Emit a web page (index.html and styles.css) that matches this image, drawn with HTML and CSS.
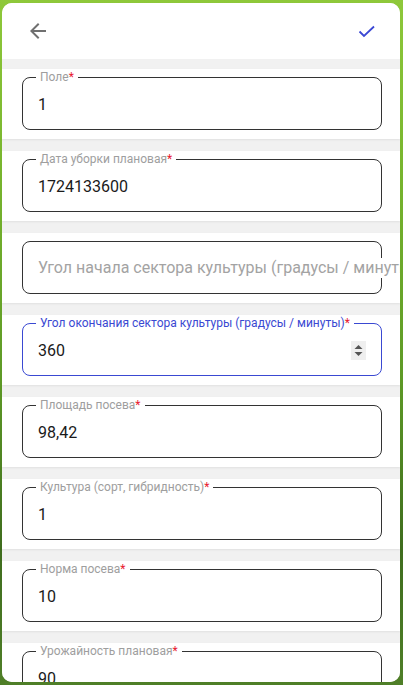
FILE: index.html
```html
<!DOCTYPE html>
<html lang="ru">
<head>
<meta charset="utf-8">
<title>Форма</title>
<link rel="stylesheet" href="styles.css">
</head>
<body>
<div class="card">
  <header class="topbar">
    <svg class="icon-back" width="24" height="24" viewBox="0 0 24 24"><path d="M20 11H7.83l5.59-5.59L12 4l-8 8 8 8 1.41-1.41L7.83 13H20v-2z" fill="#707070"/></svg>
    <svg class="icon-check" width="18" height="14" viewBox="0 0 18 14"><polyline points="1.5,6.5 6,11 16,1.5" fill="none" stroke="#3b48d4" stroke-width="1.8"/></svg>
  </header>
  <div class="list">
    <section class="row"><div class="field"><span class="label">Поле<b>*</b></span><span class="value">1</span></div></section>
    <section class="row"><div class="field"><span class="label">Дата уборки плановая<b>*</b></span><span class="value">1724133600</span></div></section>
    <section class="row"><div class="field"><span class="placeholder">Угол начала сектора культуры (градусы / минуты)</span></div></section>
    <section class="row"><div class="field focused"><span class="label">Угол окончания сектора культуры (градусы / минуты)<b>*</b></span><span class="value">360</span>
      <span class="spinner"><svg width="15" height="19" viewBox="0 0 15 19"><path d="M3.5 8 L7.5 4 L11.5 8 Z" fill="#555"/><path d="M3.5 11 L7.5 15 L11.5 11 Z" fill="#555"/></svg></span></div></section>
    <section class="row"><div class="field"><span class="label">Площадь посева<b>*</b></span><span class="value">98,42</span></div></section>
    <section class="row"><div class="field"><span class="label">Культура (сорт, гибридность)<b>*</b></span><span class="value">1</span></div></section>
    <section class="row"><div class="field"><span class="label">Норма посева<b>*</b></span><span class="value">10</span></div></section>
    <section class="row"><div class="field"><span class="label">Урожайность плановая<b>*</b></span><span class="value">90</span></div></section>
  </div>
</div>
</body>
</html>
```
FILE: styles.css
```css
html, body {
  margin: 0;
  padding: 0;
  height: 685px;
  overflow: hidden;
}
body {
  background: linear-gradient(180deg, #8ec83a 0%, #78b52e 25%, #5e9a26 55%, #3f6d1e 80%, #4f7f28 100%);
  font-family: Roboto, "Noto Sans", sans-serif;
}
.card {
  margin: 3px 3px 0 2px;
  height: 679px;
  background: #f1f1f1;
  border-radius: 10px;
  overflow: hidden;
  display: flex;
  flex-direction: column;
}
.topbar {
  height: 56px;
  flex: none;
  background: #fff;
  display: flex;
  align-items: center;
  justify-content: space-between;
  padding: 0 24px 0 24px;
  box-sizing: border-box;
}
.icon-back { display: block; }
.icon-check { display: block; margin-top: 1px; }
.list {
  display: flex;
  flex-direction: column;
  gap: 12px;
  padding-top: 10px;
}
.row {
  flex: none;
  height: 70px;
  background: #fff;
  box-sizing: border-box;
  padding: 8px 18px 0 20px;
  box-shadow: 0 1px 2px rgba(0,0,0,0.07);
}
.field {
  position: relative;
  height: 53px;
  box-sizing: border-box;
  border: 1px solid #333;
  border-radius: 8px;
  display: flex;
  align-items: center;
  padding: 3px 15px 0 15px;
}
.field.focused { border-color: #3a49d2; padding-top: 2px; }
.label {
  position: absolute;
  left: 13px;
  top: -8px;
  padding: 0 4px 0 4px;
  background: #fff;
  font-size: 12px;
  line-height: 14px;
  color: #9e9e9e;
  white-space: nowrap;
}
.label b { color: #e8182f; font-weight: 400; }
.focused .label { color: #3a49d2; }
.value {
  font-size: 16px;
  line-height: 20px;
  color: #1a1a1a;
}
.placeholder {
  font-size: 16px;
  line-height: 20px;
  color: #a3a3a3;
  white-space: nowrap;
  background: #fff;
  margin-top: -2px;
}
.spinner {
  margin-left: auto;
  width: 15px;
  height: 19px;
  background: #efefef;
  display: block;
}
.spinner svg { display: block; }
```
